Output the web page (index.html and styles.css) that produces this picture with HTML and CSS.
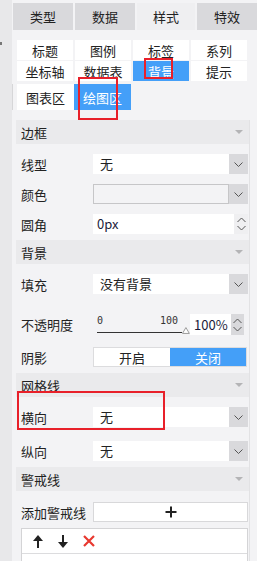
FILE: index.html
```html
<!DOCTYPE html>
<html>
<head>
  <meta charset="utf-8">
  <title>样式</title>
  <link rel="stylesheet" href="styles.css">
</head>
<body>
<div class="app">
  <div class="rail"><span class="grip"></span></div>
  <div class="main">
    <div class="tabs">
      <div class="tab">类型</div>
      <div class="tab">数据</div>
      <div class="tab on">样式</div>
      <div class="tab">特效</div>
    </div>
    <div class="subtabs">
      <div class="cell">标题</div><div class="cell">图例</div><div class="cell">标签</div><div class="cell">系列</div>
      <div class="cell">坐标轴</div><div class="cell">数据表</div><div class="cell on">背景</div><div class="cell">提示</div>
    </div>
    <div class="tabs3">
      <div class="t3">图表区</div>
      <div class="t3 on">绘图区</div>
    </div>

    <div class="panel">
      <div class="head">边框<span class="caret"></span></div>
      <div class="row r10">
        <span class="lbl">线型</span>
        <div class="sel"><span class="val">无</span><span class="btn"><svg width="9" height="5" viewBox="0 0 9 5"><polyline points="0.5,0.5 4.5,4.5 8.5,0.5" fill="none" stroke="#555" stroke-width="1"/></svg></span></div>
      </div>
      <div class="row r10">
        <span class="lbl">颜色</span>
        <div class="sel off"><span class="val"></span><span class="btn"><svg width="9" height="5" viewBox="0 0 9 5"><polyline points="0.5,0.5 4.5,4.5 8.5,0.5" fill="none" stroke="#555" stroke-width="1"/></svg></span></div>
      </div>
      <div class="row r10">
        <span class="lbl">圆角</span>
        <div class="sel"><span class="val num-t">0px</span><span class="spin light"><svg width="9" height="14" viewBox="0 0 9 14"><polyline points="0.5,5 4.5,1 8.5,5" fill="none" stroke="#555"/><polyline points="0.5,9 4.5,13 8.5,9" fill="none" stroke="#555"/></svg></span></div>
      </div>

      <div class="head h6">背景<span class="caret"></span></div>
      <div class="row r10">
        <span class="lbl">填充</span>
        <div class="sel"><span class="val">没有背景</span><span class="btn"><svg width="9" height="5" viewBox="0 0 9 5"><polyline points="0.5,0.5 4.5,4.5 8.5,0.5" fill="none" stroke="#555" stroke-width="1"/></svg></span></div>
      </div>
      <div class="row op">
        <span class="lbl">不透明度</span>
        <div class="slider">
          <div class="scale"><span>0</span><span>100</span></div>
          <div class="track"><span class="line"></span><svg width="8" height="7" viewBox="0 0 8 7"><polygon points="4,0.5 7.5,6.5 0.5,6.5" fill="#fff" stroke="#999"/></svg></div>
        </div>
        <div class="numbox"><span class="val num-t">100%</span><span class="spin"><svg width="9" height="14" viewBox="0 0 9 14"><polyline points="0.5,5 4.5,1 8.5,5" fill="none" stroke="#555"/><polyline points="0.5,9 4.5,13 8.5,9" fill="none" stroke="#555"/></svg></span></div>
      </div>
      <div class="row r12">
        <span class="lbl">阴影</span>
        <div class="toggle"><span>开启</span><span class="on">关闭</span></div>
      </div>

      <div class="head h6">网格线<span class="caret"></span></div>
      <div class="row r10">
        <span class="lbl">横向</span>
        <div class="sel"><span class="val">无</span><span class="btn"><svg width="9" height="5" viewBox="0 0 9 5"><polyline points="0.5,0.5 4.5,4.5 8.5,0.5" fill="none" stroke="#555" stroke-width="1"/></svg></span></div>
      </div>
      <div class="row r14">
        <span class="lbl">纵向</span>
        <div class="sel"><span class="val">无</span><span class="btn"><svg width="9" height="5" viewBox="0 0 9 5"><polyline points="0.5,0.5 4.5,4.5 8.5,0.5" fill="none" stroke="#555" stroke-width="1"/></svg></span></div>
      </div>

      <div class="head h6">警戒线<span class="caret"></span></div>
      <div class="row r11">
        <span class="lbl">添加警戒线</span>
        <div class="add"><svg width="12" height="12" viewBox="0 0 12 12"><path d="M6 0.5V11.5M0.5 6H11.5" stroke="#222" stroke-width="2"/></svg></div>
      </div>
      <div class="tbl">
        <div class="tbar">
          <svg width="10" height="13" viewBox="0 0 10 13"><path d="M5 13V4" stroke="#222" stroke-width="2"/><polygon points="5,0 10,6 0,6" fill="#222"/></svg>
          <svg width="10" height="13" viewBox="0 0 10 13"><path d="M5 0V9" stroke="#222" stroke-width="2"/><polygon points="5,13 10,7 0,7" fill="#222"/></svg>
          <svg width="12" height="12" viewBox="0 0 12 12"><path d="M1 1L11 11M11 1L1 11" stroke="#e8382f" stroke-width="2.2"/></svg>
        </div>
      </div>
    </div>
  </div>
</div>

<div class="mark m1"></div>
<div class="mark m2"></div>
<div class="mark m3"></div>
</body>
</html>
```

FILE: styles.css
```css
body { margin: 0; background: #f3f3f5; color: #222; font-family: "Noto Sans CJK SC", "Noto Sans", sans-serif; font-size: 13px; width: 257px; height: 561px; overflow: hidden; position: relative; }
.app { display: flex; height: 561px; }
.rail { width: 12px; background: #e8e8ea; }
.grip { display: block; width: 2px; height: 3px; margin-top: 42px; background: #777; }
.main { flex: 1; min-width: 0; }

.tabs { display: grid; grid-template-columns: 60px 60px 58px 60px; column-gap: 2px; margin: 3px 0 0 1px; }
.tab { height: 27px; background: #d9d9dc; display: flex; align-items: center; justify-content: center; }
.tab.on { background: #efeff1; }

.subtabs { display: grid; grid-template-columns: repeat(4, 56px); column-gap: 2px; row-gap: 1px; margin: 10px 0 0 5px; }
.cell { height: 20px; background: #fff; display: flex; align-items: center; justify-content: center; }
.cell.on { background: #449ff8; color: #fff; }

.tabs3 { display: flex; margin-top: 3px; border-left: 1px solid #d6d6d8; padding-left: 4px; height: 26px; }
.t3 { width: 57px; background: #fff; display: flex; align-items: center; justify-content: center; }
.t3.on { background: #449ff8; color: #fff; }

.panel { margin: 10px 0 0 4px; width: 233px; border-right: 1px solid #e2e2e4; height: 441px; }
.head { height: 24px; background: #eaeaec; display: flex; align-items: center; justify-content: space-between; padding: 0 6px 0 5px; }
.head.h6 { margin-top: 6px; }
.caret { width: 0; height: 0; border-left: 4px solid transparent; border-right: 4px solid transparent; border-top: 4px solid #b4b4b6; }

.row { display: flex; align-items: center; height: 20px; padding-left: 5px; }
.r10 { margin-top: 10px; }
.r11 { margin-top: 11px; }
.r12 { margin-top: 12px; }
.r14 { margin-top: 14px; }
.lbl { width: 72px; flex: none; }

.sel { width: 155px; height: 20px; display: flex; background: #fff; }
.sel .val { flex: 1; padding-left: 7px; line-height: 20px; }
.sel .btn { width: 19px; background: #d9d9dc; display: flex; align-items: center; justify-content: center; }
.sel.off { background: transparent; }
.sel.off .val { background: #f3f3f5; border: 1px solid #c6c6c8; }
.num-t { color: #1c1c3a; padding-left: 4px !important; }
.spin { width: 14px; background: #d9d9dc; display: flex; align-items: center; justify-content: center; }
.spin.light { background: #efeff1; }

.row.op { height: 21px; margin-top: 20px; }
.slider { width: 97px; padding-left: 4px; box-sizing: border-box; display: flex; flex-direction: column; }
.scale { display: flex; justify-content: space-between; width: 81px; font-family: "DejaVu Sans Mono", monospace; font-size: 10px; line-height: 11px; color: #333; }
.track { display: flex; align-items: flex-end; height: 8px; }
.line { width: 87px; height: 1px; background: #333; margin-bottom: 1px; }
.numbox { display: flex; height: 21px; width: 54px; margin-left: 0; }
.numbox .val { width: 40px; background: #fff; line-height: 21px; font-size: 13px; }

.toggle { display: flex; width: 154px; height: 20px; border: 1px solid #dcdcde; box-sizing: border-box; background: #fff; }
.toggle span { flex: 1; display: flex; align-items: center; justify-content: center; }
.toggle .on { background: #449ff8; color: #fff; }

.add { width: 155px; height: 20px; background: #fff; border: 1px solid #d8d8da; box-sizing: border-box; display: flex; align-items: center; justify-content: center; }

.tbl { margin: 6px 0 0 5px; width: 227px; height: 40px; background: #fff; border: 1px solid #d4d4d6; border-bottom: none; box-sizing: border-box; }
.tbar { height: 24px; border-bottom: 1px solid #dcdcde; display: flex; align-items: center; gap: 15px; padding-left: 11px; }

.mark { position: absolute; border: 2px solid #e8202a; box-sizing: border-box; }
.m1 { left: 144px; top: 58px; width: 29px; height: 21px; }
.m2 { left: 78px; top: 77px; width: 40px; height: 43px; }
.m3 { left: 17px; top: 391px; width: 148px; height: 39px; }
```
